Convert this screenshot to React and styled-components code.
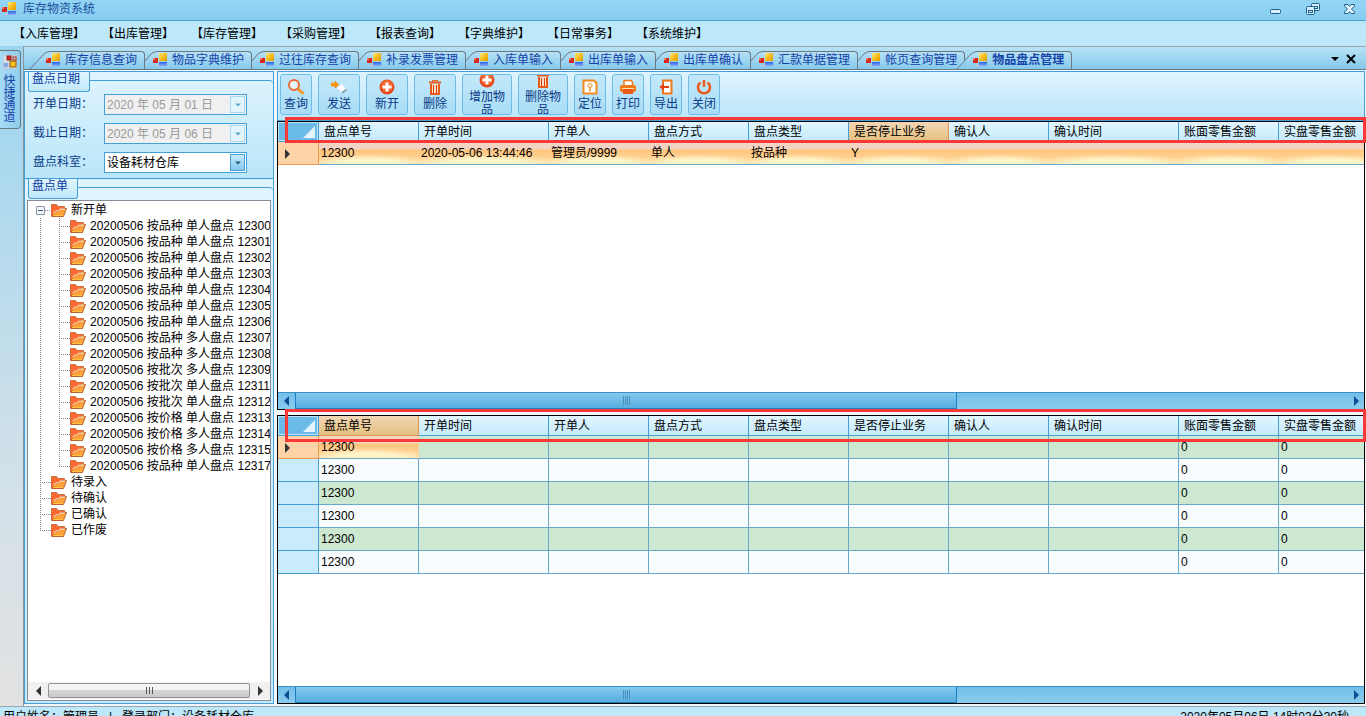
import React from 'react';
import styled, { createGlobalStyle, css } from 'styled-components';

/* Data ---------------------------*/
const menus = ['入库管理', '出库管理', '库存管理', '采购管理', '报表查询', '字典维护', '日常事务', '系统维护'];

const tabs = [
    '库存信息查询', '物品字典维护', '过往库存查询', '补录发票管理', '入库单输入',
    '出库单输入', '出库单确认', '汇款单据管理', '帐页查询管理', '物品盘点管理',
];

const tools = [
    { label: '查询', icon: 'search', width: 32 },
    { label: '发送', icon: 'send', width: 42 },
    { label: '新开', icon: 'plus', width: 42 },
    { label: '删除', icon: 'trash', width: 42 },
    { label: '增加物品', icon: 'plus', width: 50 },
    { label: '删除物品', icon: 'trash', width: 50 },
    { label: '定位', icon: 'locate', width: 32 },
    { label: '打印', icon: 'print', width: 32 },
    { label: '导出', icon: 'exit', width: 32 },
    { label: '关闭', icon: 'power', width: 32 },
];

const orders = [
    ['按品种', '单人盘点', '12300'],
    ['按品种', '单人盘点', '12301'],
    ['按品种', '单人盘点', '12302'],
    ['按品种', '单人盘点', '12303'],
    ['按品种', '单人盘点', '12304'],
    ['按品种', '单人盘点', '12305'],
    ['按品种', '单人盘点', '12306'],
    ['按品种', '多人盘点', '12307'],
    ['按品种', '多人盘点', '12308'],
    ['按批次', '多人盘点', '12309'],
    ['按批次', '单人盘点', '12311'],
    ['按批次', '单人盘点', '12312'],
    ['按价格', '单人盘点', '12313'],
    ['按价格', '多人盘点', '12314'],
    ['按价格', '多人盘点', '12315'],
    ['按品种', '单人盘点', '12317'],
];

const otherNodes = ['待录入', '待确认', '已确认', '已作废'];

const columns = [
    { title: '盘点单号', width: 100 },
    { title: '开单时间', width: 130 },
    { title: '开单人', width: 100 },
    { title: '盘点方式', width: 100 },
    { title: '盘点类型', width: 100 },
    { title: '是否停止业务', width: 100 },
    { title: '确认人', width: 100 },
    { title: '确认时间', width: 130 },
    { title: '账面零售金额', width: 100 },
    { title: '实盘零售金额', width: 100 },
];

const masterRows = [
    ['12300', '2020-05-06 13:44:46', '管理员/9999', '单人', '按品种', 'Y', '', '', '', ''],
];

const detailRows = Array.from({ length: 6 }, () => ['12300', '', '', '', '', '', '', '', '0', '0']);

/* Icons ---------------------------*/
const FormIcon = () => (
    <svg width="14" height="14" viewBox="0 0 14 14" aria-hidden="true">
        <defs>
            <linearGradient id="formYellow" x1="0" y1="0" x2="1" y2="1">
                <stop offset="0" stopColor="#ffe98a" />
                <stop offset=".5" stopColor="#f6be1c" />
                <stop offset="1" stopColor="#e09a00" />
            </linearGradient>
            <linearGradient id="formBlue" x1="0" y1="0" x2="0" y2="1">
                <stop offset="0" stopColor="#2f62dc" />
                <stop offset="1" stopColor="#86b0ff" />
            </linearGradient>
        </defs>
        <path d="M2 10h1v3h3v-1h-3v-2z" fill="#e9b9bf" />
        <rect x="0" y="5" width="5" height="5" fill="#d8281c" />
        <rect x="0" y="5" width="2" height="2" fill="#f47a68" />
        <rect x="6" y="0" width="8" height="8" fill="url(#formYellow)" />
        <rect x="6" y="9" width="8" height="4" fill="url(#formBlue)" />
    </svg>
);

const DockIcon = () => (
    <svg width="14" height="14" viewBox="0 0 14 14" aria-hidden="true">
        <path d="M.5 .5h13v13H.5z" fill="#d9e4ea" stroke="#c3ccd4" />
        <rect x="4" y="1" width="4" height="4" fill="#d8281c" stroke="#8f1d14" />
        <rect x="10" y="2" width="3" height="3" fill="#e6eef2" stroke="#a01c14" />
        <rect x="1" y="8" width="4" height="4" fill="#6f9bf0" stroke="#aab8d8" />
        <rect x="7" y="6" width="6" height="6" fill="#f8c018" stroke="#8a5a10" />
    </svg>
);

const FolderIcon = () => (
    <svg width="16" height="13" viewBox="0 0 16 13" aria-hidden="true">
        <path d="M.5 12.500V.5H5.500L7 2.500H13.500V5" fill="#ff6a34" stroke="#c8703c" />
        <path d="M1 12.500L4 7.500H7L9.500 4.500H15.500L12.500 12.500z" fill="#ffa03a" stroke="#b8642c" />
        <path d="M2.500 9.500L4.500 7H7L9 5H14" fill="none" stroke="#ffe9d0" />
        <path d="M2 11.500H12" stroke="#ffc03c" />
    </svg>
);

const toolShapes = {
    search: (
        <>
            <path d="M10.500 10.500L14.500 14" stroke="#f59a3a" strokeWidth="3" strokeLinecap="round" />
            <circle cx="6" cy="6" r="5" fill="#e2f3fc" stroke="#ec6a34" strokeWidth="2" />
            <path d="M3.500 5Q4.500 3 7 3.500" fill="none" stroke="#fff" />
        </>
    ),
    send: (
        <>
            <path d="M7 9H11V6L16 11L11 15V12H7z" fill="#5c747e" opacity=".6" />
            <path d="M0 4H4V2L8 6L4 9V7H0z" fill="#ff9900" stroke="#e07a00" strokeWidth=".5" />
            <path d="M6 9L8 6L10 7.500V4.500L15 9.500L10 13.500V11.500L8 12z" fill="#fff" />
        </>
    ),
    plus: (
        <>
            <circle cx="8" cy="8" r="7.500" fill="#e4481a" />
            <circle cx="8" cy="7" r="6" fill="#f2682e" />
            <path d="M8 3.500V12.500M3.500 8H12.500" stroke="#fff" strokeWidth="3" />
        </>
    ),
    trash: (
        <g fill="none" stroke="#e85a18">
            <path d="M2 3.500H14" strokeWidth="2" />
            <path d="M5.500 3V1.500H10.500V3" strokeWidth="1" />
            <path d="M4 5V15H12V5" fill="#fbe0c8" strokeWidth="2" />
            <path d="M6.500 6V14M9.500 6V14" stroke="#e03c10" strokeWidth="1" />
        </g>
    ),
    locate: (
        <g fill="none" stroke="#f08a1c">
            <path d="M1.500 1.500H12L14.500 4V14.500H1.500z" fill="#fff" strokeWidth="2" />
            <circle cx="8" cy="6.500" r="2" strokeWidth="1" />
            <path d="M8 8.500V12.500" strokeWidth="1.500" />
        </g>
    ),
    print: (
        <>
            <path d="M4 6V1.500H11L12.500 3V6" fill="#fff" stroke="#f07818" strokeWidth="1.500" />
            <rect x="0" y="6" width="16" height="7" rx="2" fill="#f07818" />
            <rect x="3" y="10" width="10" height="5" fill="#e85a10" />
            <path d="M2 9.500H14" stroke="#ffe0c0" />
        </>
    ),
    exit: (
        <g fill="none">
            <path d="M5 5V1.500H13.500V14.500H5V11" fill="#fff" stroke="#f07818" strokeWidth="2" />
            <path d="M3 8H11" stroke="#e8400c" strokeWidth="2" />
            <path d="M6 4L1.500 8L6 12z" fill="#e8400c" />
        </g>
    ),
    power: (
        <g fill="none" stroke="#ec5a1c" strokeWidth="2.500">
            <path d="M4.500 3.500A6 6 0 1 0 11.500 3.500" />
            <path d="M8 1V8" />
        </g>
    ),
};

const ToolIcon = ({ name }) => (
    <svg width="16" height="16" viewBox="0 0 16 16" aria-hidden="true">{toolShapes[name]}</svg>
);

const Triangle = ({ dir, color }) => {
    const paths = { left: 'M6 -1V9L1 4z', right: 'M2 -1V9L7 4z', down: 'M0 2H8L4 6z' };
    return (
        <svg width="8" height="8" viewBox="0 0 8 8" overflow="visible" aria-hidden="true">
            <path d={paths[dir]} fill={color} />
        </svg>
    );
};

/* Components ---------------------------*/
const TitleBar = () => (
    <TitleBarStyled>
        <FormIcon />
        <h1>库存物资系统</h1>
        <WindowButton aria-label="最小化">
            <svg width="16" height="16" viewBox="0 0 16 16">
                <rect x="2.500" y="8.500" width="10" height="4" rx="1" fill="#d8f0fb" stroke="#1f5f8c" />
            </svg>
        </WindowButton>
        <WindowButton aria-label="还原">
            <svg width="16" height="16" viewBox="0 0 16 16" fill="#d8f0fb" stroke="#1f5f8c">
                <rect x="6.500" y="2.500" width="8" height="7" rx="1" />
                <rect x="9.500" y="5.500" width="3" height="2" />
                <rect x="1.500" y="5.500" width="8" height="8" rx="1" />
                <rect x="3.500" y="9.500" width="4" height="2" />
            </svg>
        </WindowButton>
        <WindowButton aria-label="关闭窗口">
            <svg width="16" height="16" viewBox="0 0 16 16">
                <path d="M2.500 3.500H6L7.500 5.500L9 3.500H12.500V5L9.500 8L12.500 11V12.500H9L7.500 10.500L6 12.500H2.500V11L5.500 8L2.500 5z" fill="#e4f5fd" stroke="#1f5f8c" />
            </svg>
        </WindowButton>
    </TitleBarStyled>
);

const TabStrip = () => (
    <TabStripStyled>
        {tabs.map((tab, i) => {
            const full = i === 0 || i === tabs.length - 1;
            const edge = full ? 'M0 18L14 3Q17 0.500 20 0.500' : 'M8 10L14 3Q17 0.500 20 0.500';
            return (
                <Tab key={tab} $active={i === tabs.length - 1}>
                    <svg className="slope" width="20" height="18" viewBox="0 0 20 18" aria-hidden="true">
                        <defs>
                            <linearGradient id="tabFill" gradientUnits="userSpaceOnUse" x1="0" y1="0" x2="0" y2="18">
                                <stop offset="0" stopColor="#b5e1f6" />
                                <stop offset="1" stopColor="#86c9eb" />
                            </linearGradient>
                        </defs>
                        <path d={edge + (full ? 'V18z' : 'V18H8z')} fill="url(#tabFill)" />
                        <path d={edge} fill="none" stroke="#6d7880" />
                    </svg>
                    <FormIcon />
                    <span>{tab}</span>
                </Tab>
            );
        })}
        <Spacer />
        <StripButton aria-label="窗口列表"><Triangle dir="down" color="#000" /></StripButton>
        <StripButton aria-label="关闭当前页">
            <svg width="10" height="10" viewBox="0 0 10 10">
                <path d="M1 1L9 9M9 1L1 9" stroke="#000" strokeWidth="2" />
            </svg>
        </StripButton>
    </TabStripStyled>
);

const GroupHead = ({ children }) => (
    <GroupHeadStyled>
        <h2>{children}</h2>
        <i />
    </GroupHeadStyled>
);

const DateField = ({ id, label, value }) => (
    <Field>
        <label htmlFor={id}>{label}</label>
        <Combo $disabled>
            <input id={id} type="text" defaultValue={value} disabled />
            <ComboButton type="button" disabled aria-label={label + '选择'}>
                <Triangle dir="down" color="#5fa8cc" />
            </ComboButton>
        </Combo>
    </Field>
);

const FilterPanel = () => (
    <Group>
        <GroupHead>盘点日期</GroupHead>
        <GroupBody>
            <DateField id="startDate" label="开单日期：" value="2020 年 05 月 01 日" />
            <DateField id="endDate" label="截止日期：" value="2020 年 05 月 06 日" />
            <Field>
                <label htmlFor="dept">盘点科室：</label>
                <Combo>
                    <select id="dept" defaultValue="设备耗材仓库">
                        <option>设备耗材仓库</option>
                    </select>
                    <ComboArrow><Triangle dir="down" color="#1f5f7c" /></ComboArrow>
                </Combo>
            </Field>
        </GroupBody>
    </Group>
);

const OrderTree = () => (
    <Group $grow>
        <GroupHead>盘点单</GroupHead>
        <TreeBox>
            <Tree>
                <TreeNode $open>
                    <Expander aria-label="折叠新开单" />
                    <Branch $width={6} $dash />
                    <FolderIcon />
                    <span>新开单</span>
                </TreeNode>
                {orders.map(([kind, mode, no], i) => (
                    <TreeNode key={no}>
                        <Branch $width={19} $line="100%" />
                        <Branch $width={11} $line={i === orders.length - 1 ? '50%' : '100%'} $dash />
                        <FolderIcon />
                        <span>20200506 {kind} {mode} {no}</span>
                    </TreeNode>
                ))}
                {otherNodes.map((node, i) => (
                    <TreeNode key={node}>
                        <Branch $width={11} $line={i === otherNodes.length - 1 ? '50%' : '100%'} $dash />
                        <FolderIcon />
                        <span>{node}</span>
                    </TreeNode>
                ))}
            </Tree>
            <TreeScroll>
                <button aria-label="向左"><Triangle dir="left" color="#333" /></button>
                <div className="thumb"><i /><i /><i /></div>
                <button aria-label="向右"><Triangle dir="right" color="#333" /></button>
            </TreeScroll>
        </TreeBox>
    </Group>
);

const DataGrid = ({ rows, hotColumn, fullRow, markHeight, markTop }) => (
    <GridFrame>
        <GridView>
            <Table>
                <colgroup>
                    <col width="41" />
                    {columns.map(col => <col key={col.title} width={col.width} />)}
                </colgroup>
                <thead>
                    <tr>
                        <Corner>
                            <svg width="12" height="12" viewBox="0 0 12 12" aria-hidden="true">
                                <path d="M12 0V12H0z" fill="#e4f3fc" />
                            </svg>
                        </Corner>
                        {columns.map((col, i) => (
                            <HeadCell key={col.title} $hot={i === hotColumn}>{col.title}</HeadCell>
                        ))}
                    </tr>
                </thead>
                <tbody>
                    {rows.map((row, r) => (
                        <tr key={r}>
                            <RowHead scope="row" $current={r === 0}>
                                {r === 0 && <Triangle dir="right" color="#333" />}
                            </RowHead>
                            {row.map((value, c) => (
                                <Cell key={c} $odd={r % 2 === 0} $selected={r === 0 && (fullRow || c === 0)} $plain={fullRow}>
                                    {value}
                                </Cell>
                            ))}
                        </tr>
                    ))}
                </tbody>
            </Table>
        </GridView>
        <GridScroll>
            <button aria-label="向左滚动"><Triangle dir="left" color="#0d4f94" /></button>
            <div className="thumb"><i /><i /><i /><i /></div>
            <Spacer />
            <button aria-label="向右滚动"><Triangle dir="right" color="#0d4f94" /></button>
        </GridScroll>
        <HeaderMark $top={markTop} $height={markHeight} />
    </GridFrame>
);

const App = () => (
    <>
        <GlobalStyle />
        <Shell>
            <TitleBar />
            <MenuBar>
                {menus.map(menu => <button key={menu}>【{menu}】</button>)}
            </MenuBar>
            <Main>
                <Dock>
                    <DockTab>
                        <DockIcon />
                        <span>快捷通道</span>
                    </DockTab>
                </Dock>
                <Workspace>
                    <TabStrip />
                    <Panes>
                        <SidePane>
                            <FilterPanel />
                            <OrderTree />
                        </SidePane>
                        <WorkPane>
                            <Toolbar>
                                {tools.map(tool => (
                                    <ToolButton key={tool.label} $width={tool.width}>
                                        <ToolIcon name={tool.icon} />
                                        <span>{tool.label}</span>
                                    </ToolButton>
                                ))}
                            </Toolbar>
                            <GridStack>
                                <DataGrid rows={masterRows} hotColumn={5} fullRow markTop={-5} markHeight={26} />
                                <DataGrid rows={detailRows} hotColumn={0} markTop={-7} markHeight={33} />
                            </GridStack>
                        </WorkPane>
                    </Panes>
                </Workspace>
            </Main>
            <StatusBar>
                <span>用户姓名：管理员&nbsp;&nbsp; | &nbsp;&nbsp;登录部门：设备耗材仓库</span>
                <span>2020年05月06日 14时03分30秒</span>
            </StatusBar>
        </Shell>
    </>
);

export default App;

/* Styles ---------------------------*/
const line = '#459fd8';
const navy = '#0a3a86';

const GlobalStyle = createGlobalStyle`
    * {
        box-sizing: border-box;
    }

    body {
        margin: 0;
        overflow: hidden;
    }

    body, button, input, select {
        font-family: "Liberation Sans", "Noto Sans CJK SC", sans-serif;
        font-size: 12px;
        line-height: 16px;
        color: #000;
    }

    button {
        margin: 0;
        padding: 0;
        border: 0;
        background: none;
    }

    svg {
        display: block;
        flex: none;
    }
`;

const Shell = styled.div`
    display: flex;
    flex-direction: column;
    height: 100vh;
    background: #bde8fa;
`;

const Spacer = styled.div`
    flex: 1;
`;

const TitleBarStyled = styled.header`
    display: flex;
    flex: none;
    height: 21px;
    padding: 0 8px 3px 2px;
    align-items: center;
    border-bottom: 1px solid #4a9fce;
    background: linear-gradient(#94d5f5, #87cdf0);

    h1 {
        flex: 1;
        margin: 0 0 0 7px;
        font-size: 12px;
        font-weight: 400;
        color: #1c4f9c;
    }
`;

const WindowButton = styled.button`
    width: 16px;
    height: 16px;
    margin-left: 21px;
`;

const MenuBar = styled.nav`
    display: flex;
    flex: none;
    height: 25px;
    padding: 1px 0 0 13px;
    gap: 17px;
    align-items: center;

    button {
        width: 72px;
        white-space: nowrap;
    }
`;

const Main = styled.div`
    display: flex;
    flex: 1;
    min-height: 0;
`;

const Dock = styled.aside`
    flex: none;
    width: 23px;
    padding-top: 4px;
    background: linear-gradient(#9bd5f0, #cfe0ea 60%, #e2e2e2);
`;

const DockTab = styled.button`
    display: flex;
    flex-direction: column;
    width: 21px;
    height: 79px;
    padding: 4px 4px 0 3px;
    gap: 6px;
    align-items: center;
    border: 1px solid #6d7880;
    border-left: 0;
    border-radius: 0 4px 4px 0;
    background: linear-gradient(to right, #a6dbf5, #8fcdec);

    span {
        width: 12px;
        line-height: 12px;
        color: #1742a8;
    }
`;

const Workspace = styled.main`
    display: flex;
    flex: 1;
    flex-direction: column;
    min-width: 0;
    border-top: 1px solid #9aa4aa;
    border-left: 1px solid #8a949a;
    background: #f0f6fa;
`;

const TabStripStyled = styled.div`
    display: flex;
    flex: none;
    height: 23px;
    padding: 4px 7px 0 14px;
    align-items: stretch;
    border-bottom: 1px solid #6d7880;
    background: linear-gradient(#b8e3f7, #84c8ea);
`;

const Tab = styled.button`
    position: relative;
    display: flex;
    flex: none;
    padding: 0 8px 1px 8px;
    gap: 5px;
    align-items: center;
    color: #1742a8;
    font-weight: ${props => (props.$active ? 700 : 400)};
    white-space: nowrap;

    /* face of the tab, right of the slanted edge */
    &::before {
        content: '';
        position: absolute;
        inset: 0 0 0 12px;
        border: 1px solid #6d7880;
        border-width: 1px 1px 0 0;
        border-radius: 0 4px 0 0;
        background: linear-gradient(#b5e1f6, #86c9eb);
    }

    .slope {
        position: absolute;
        top: 0;
        left: -8px;
        z-index: 1;
    }

    .slope ~ * {
        position: relative;
        z-index: 2;
    }
`;

const StripButton = styled.button`
    display: flex;
    width: 16px;
    padding-bottom: 2px;
    align-items: center;
    justify-content: center;
`;

const Panes = styled.div`
    display: flex;
    flex: 1;
    min-height: 0;
    padding: 1px 1px 2px 0;
    gap: 3px;
`;

const SidePane = styled.section`
    display: flex;
    flex: none;
    flex-direction: column;
    width: 250px;
    border: 1px solid ${line};
    background: linear-gradient(#dff4fe, #b9e6f9 107px, #dff4fe 108px, #c2eafa);
`;

const Group = styled.div`
    display: flex;
    flex-direction: column;
    border-bottom: ${props => (props.$grow ? '0' : `1px solid ${line}`)};

    ${props => props.$grow && css`
        flex: 1;
        min-height: 0;
    `}
`;

const GroupHeadStyled = styled.div`
    display: flex;
    height: 20px;
    padding-left: 3px;

    h2 {
        margin: 0;
        padding: 0 9px 0 3px;
        border: 1px solid ${line};
        border-top: 0;
        border-radius: 0 0 3px 3px;
        background: linear-gradient(#e2f6ff, #bfe8fb);
        color: #0a3aa0;
        font-size: 12px;
        font-weight: 400;
        line-height: 15px;
    }

    i {
        flex: 1;
        height: 12px;
        margin-top: 8px;
        border-top: 1px solid ${line};
        border-top-right-radius: 4px;
    }
`;

const GroupBody = styled.div`
    display: flex;
    flex-direction: column;
    padding: 2px 0 5px 8px;
    gap: 8px;
`;

const Field = styled.div`
    display: flex;

    label {
        width: 71px;
        color: ${navy};
        line-height: 20px;
    }
`;

const Combo = styled.div`
    display: flex;
    width: 143px;
    height: 21px;
    border: 1px solid ${line};
    background: ${props => (props.$disabled ? '#f0f0f0' : '#fff')};

    input, select {
        flex: 1;
        min-width: 0;
        padding: 0 2px;
        border: 0;
        background: none;
        appearance: none;
    }

    input:disabled {
        color: #9a9a9a;
    }
`;

const ComboButton = styled.button`
    display: flex;
    width: 15px;
    margin: 1px;
    align-items: center;
    justify-content: center;
    border: 1px solid #a8daf4;
    background: #e2f4fc;

    svg {
        width: 6px;
    }
`;

const ComboArrow = styled.span`
    display: flex;
    width: 15px;
    margin: 1px;
    align-items: center;
    justify-content: center;
    border: 1px solid ${line};
    background: linear-gradient(#c8ebfb, #84c8ec);
    pointer-events: none;

    svg {
        width: 6px;
    }
`;

const TreeBox = styled.div`
    display: flex;
    flex: 1;
    flex-direction: column;
    min-height: 0;
    margin: 1px 2px 2px;
    border: 1px solid #868c98;
    background: #fff;
`;

const Tree = styled.ul`
    flex: 1;
    min-height: 0;
    margin: 0;
    padding: 1px 0 0;
    overflow: hidden;
    list-style: none;
`;

const TreeNode = styled.li`
    display: flex;
    height: 16px;
    padding-left: ${props => (props.$open ? 8 : 12)}px;
    align-items: center;
    white-space: pre;

    span:last-child {
        margin-left: 4px;
    }
`;

const Expander = styled.button`
    flex: none;
    width: 9px;
    height: 9px;
    border: 1px solid #8a96a4;
    border-radius: 1px;
    background: linear-gradient(#3a5fa8, #3a5fa8) center / 5px 1px no-repeat, #f4f4f4;
`;

const Branch = styled.i`
    flex: none;
    width: ${props => props.$width}px;
    height: 16px;
    background-image:
        repeating-linear-gradient(#888 0 1px, transparent 1px 2px),
        repeating-linear-gradient(to right, #888 0 1px, transparent 1px 2px);
    background-position: 0 0, 0 8px;
    background-repeat: no-repeat;
    background-size: 1px ${props => props.$line || '0'}, ${props => (props.$dash ? '100% 1px' : '0 0')};
`;

const TreeScroll = styled.div`
    display: flex;
    flex: none;
    height: 17px;
    margin-bottom: 1px;
    padding: 0 1px;
    background: #f0f0f0;

    button {
        display: flex;
        width: 19px;
        align-items: center;
        justify-content: center;
    }

    .thumb {
        display: flex;
        flex: 1;
        margin: 1px 0;
        gap: 2px;
        align-items: center;
        justify-content: center;
        border: 1px solid #949494;
        border-radius: 2px;
        background: linear-gradient(#f4f4f4 45%, #d4d6d8 50%, #c8cacc);
    }

    i {
        width: 1px;
        height: 7px;
        background: #555;
    }
`;

const WorkPane = styled.section`
    display: flex;
    flex: 1;
    flex-direction: column;
    min-width: 0;
`;

const Toolbar = styled.div`
    display: flex;
    flex: none;
    height: 50px;
    padding: 2px 2px 5px;
    gap: 6px;
    border: 1px solid ${line};
    background: linear-gradient(#dff5ff, #b9e4f9);
`;

const ToolButton = styled.button`
    display: flex;
    flex: none;
    flex-direction: column;
    width: ${props => props.$width}px;
    gap: 3px;
    align-items: center;
    justify-content: center;
    overflow: hidden;
    border: 1px solid #6fbce6;
    border-radius: 3px;
    background: linear-gradient(#c3e9fb, #a9dcf6);

    span {
        max-width: 36px;
        color: ${navy};
        line-height: 13px;
        word-break: break-all;
    }
`;

const GridStack = styled.div`
    display: flex;
    flex: 1;
    flex-direction: column;
    min-height: 0;
    gap: 5px;
`;

const GridFrame = styled.div`
    position: relative;
    display: flex;
    flex: 1;
    flex-direction: column;
    min-height: 0;
    border: 1px solid #000;
    background: #fff;
`;

const GridView = styled.div`
    flex: 1;
    min-height: 0;
    overflow: hidden;
`;

const Table = styled.table`
    width: 1101px;
    table-layout: fixed;
    border-collapse: separate;
    border-spacing: 0;

    th, td {
        overflow: hidden;
        font-weight: 400;
        text-align: left;
        white-space: nowrap;
        line-height: 18px;
    }
`;

const Corner = styled.td`
    height: 20px;
    padding: 0 3px 0 0;
    border: 1px solid ${line};
    border-width: 0 1px 1px 0;
    background: #6bbbe8;
    box-shadow: inset 0 0 0 1px #bfe3f6;

    svg {
        margin-left: auto;
    }
`;

const HeadCell = styled.th`
    height: 20px;
    padding: 1px 0 0 5px;
    border: 1px solid ${props => (props.$hot ? '#e09650' : line)};
    border-width: 0 1px 1px 0;
    background: ${props => (props.$hot ? 'linear-gradient(#f2d6b6, #e4c07e)' : 'linear-gradient(#e2f5ff, #c4eafb)')};
`;

const RowHead = styled.th`
    height: 23px;
    padding: 2px 0 0 5px;
    border: 1px solid ${props => (props.$current ? '#ee9a50' : line)};
    border-width: 0 1px 1px 0;
    background: ${props => (props.$current ? '#ffd3a8' : '#c9ebfc')};
`;

const Cell = styled.td`
    height: 23px;
    padding: 0 0 0 2px;
    border: 1px solid #6aa8c8;
    border-width: 0 1px 1px 0;
    background: ${props => (props.$odd ? '#cde8d0' : '#f8fcfe')};

    ${props => props.$selected && css`
        border-right: ${props.$plain ? '0' : '1px solid #fbd49a'};
        background:
            radial-gradient(ellipse 65% 45% at 50% 100%, #fff3c8 50%, transparent),
            linear-gradient(#f3d3c2 7px, #ffc67e 8px, #ffd9a0);
    `}
`;

const GridScroll = styled.div`
    display: flex;
    flex: none;
    height: 17px;
    border-top: 1px solid #3b8fc8;
    background: linear-gradient(#72bfe9, #8accee);

    button {
        display: flex;
        width: 17px;
        align-items: center;
        justify-content: center;
    }

    .thumb {
        display: flex;
        flex: 0 0 61%;
        gap: 1px;
        align-items: center;
        justify-content: center;
        border: 1px solid #1f7cc0;
        border-top: 0;
        background: linear-gradient(#84cbef, #57acdf);
    }

    i {
        width: 1px;
        height: 9px;
        background: #4a90bc;
    }
`;

/* red frame laid over the header row */
const HeaderMark = styled.div`
    position: absolute;
    top: ${props => props.$top}px;
    right: -2px;
    left: 7px;
    z-index: 3;
    height: ${props => props.$height}px;
    border: 3px solid #f93838;
    pointer-events: none;
`;

const StatusBar = styled.footer`
    display: flex;
    flex: none;
    height: 10px;
    padding: 3px 17px 0 3px;
    justify-content: space-between;
    overflow: hidden;
    border-top: 1px solid #9aa4aa;
    line-height: 14px;
`;
